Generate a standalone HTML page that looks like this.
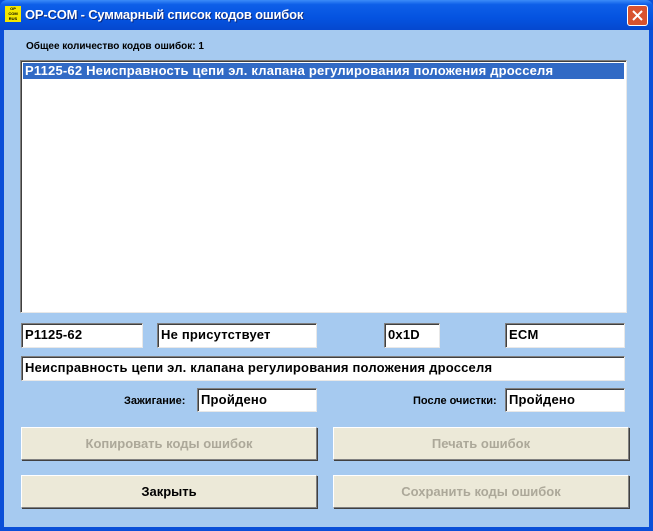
<!DOCTYPE html>
<html><head><meta charset="utf-8"><style>
body{margin:0;width:653px;height:531px;overflow:hidden;font-family:"Liberation Sans","DejaVu Sans",sans-serif;font-weight:bold;}
.win{position:absolute;left:0;top:0;width:653px;height:531px;background:#0a4fd8;}
.title{position:absolute;left:0;top:0;width:653px;height:30px;background:linear-gradient(#3c8cf8 0%,#0e5fe8 15%,#0553e0 60%,#0548cf 100%);border-radius:7px 7px 0 0;}
.title .t{position:absolute;left:25px;top:7px;color:#fff;font-size:13px;letter-spacing:-0.2px;text-shadow:1px 1px #0a2a80;}
.logo{position:absolute;left:5px;top:6px;width:16px;height:16px;background:#f4e800;font-size:4px;line-height:5px;color:#000;text-align:center;}
.close{position:absolute;left:627px;top:5px;width:19px;height:19px;border:1px solid #fff;border-radius:3px;background:#d8532f;}
.client{position:absolute;left:4px;top:30px;width:645px;height:497px;background:#a6caf0;}
.a{position:absolute;font-size:11px;}
.box{position:absolute;background:#fff;border-top:1px solid #7f7f7f;border-left:1px solid #7f7f7f;border-bottom:1px solid #e8e8e8;border-right:1px solid #e8e8e8;box-shadow:inset 1px 1px #404040;font-size:13px;letter-spacing:0.2px;line-height:22px;padding-left:3px;box-sizing:border-box;white-space:nowrap;}
.btn{position:absolute;background:#ece9d8;border:1px solid;border-color:#fff #808080 #808080 #fff;box-shadow:1px 1px #404040;font-size:13px;text-align:center;box-sizing:border-box;}
</style></head><body>
<div class="win">
<div class="title"><div class="logo">OP<br>COM<br>RUS</div><div class="t">OP-COM - Суммарный список кодов ошибок</div>
<div class="close"><svg width="19" height="19"><path d="M5 5L14 14M14 5L5 14" stroke="#fff" stroke-width="2"/></svg></div></div>
</div>
<div class="client"></div>
<div class="a" style="left:26px;top:41px;font-size:10px">Общее количество кодов ошибок: 1</div>
<div class="box" style="left:20px;top:60px;width:607px;height:253px;padding:2px">
<div style="background:#316ac5;color:#fff;height:16px;line-height:16px;padding-left:2px;">P1125-62 Неисправность цепи эл. клапана регулирования положения дросселя</div></div>
<div class="box" style="left:21px;top:323px;width:122px;height:25px">P1125-62</div>
<div class="box" style="left:157px;top:323px;width:160px;height:25px">Не присутствует</div>
<div class="box" style="left:384px;top:323px;width:56px;height:25px">0x1D</div>
<div class="box" style="left:505px;top:323px;width:120px;height:25px">ECM</div>
<div class="box" style="left:21px;top:356px;width:604px;height:25px">Неисправность цепи эл. клапана регулирования положения дросселя</div>
<div class="a" style="left:124px;top:395px">Зажигание:</div>
<div class="box" style="left:197px;top:388px;width:120px;height:24px">Пройдено</div>
<div class="a" style="left:413px;top:395px">После очистки:</div>
<div class="box" style="left:505px;top:388px;width:120px;height:24px">Пройдено</div>
<div class="btn" style="left:21px;top:427px;width:296px;height:33px;line-height:31px;color:#aca899">Копировать коды ошибок</div>
<div class="btn" style="left:333px;top:427px;width:296px;height:33px;line-height:31px;color:#aca899">Печать ошибок</div>
<div class="btn" style="left:21px;top:475px;width:296px;height:33px;line-height:31px">Закрыть</div>
<div class="btn" style="left:333px;top:475px;width:296px;height:33px;line-height:31px;color:#aca899">Сохранить коды ошибок</div>
</body></html>
